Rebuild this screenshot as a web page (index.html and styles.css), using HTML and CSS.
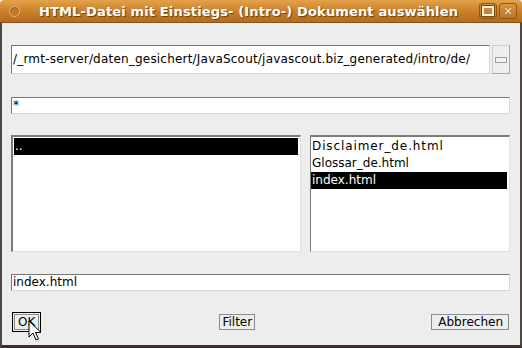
FILE: index.html
```html
<!DOCTYPE html>
<html>
<head>
<meta charset="utf-8">
<title>HTML-Datei mit Einstiegs- (Intro-) Dokument auswählen</title>
<link rel="stylesheet" href="styles.css">
</head>
<body>
<div class="dialog">
	<div class="titlebar">
		<span class="menu-dot"></span>
		<span class="title">HTML-Datei mit Einstiegs- (Intro-) Dokument auswählen</span>
		<span class="tb-btn"><span class="max-box"></span></span>
		<span class="tb-btn close">&#x2715;</span>
	</div>
	<div class="content">
		<div class="path-row">
			<div class="field path">/_rmt-server/daten_gesichert/JavaScout/javascout.biz_generated/intro/de/</div>
			<div class="path-btn"><span class="bar"></span></div>
		</div>
		<div class="field filter">*</div>
		<div class="lists">
			<ul class="list dirs">
				<li class="selected">..</li>
			</ul>
			<ul class="list files">
				<li class="wide">Disclaimer_de.html</li>
				<li>Glossar_de.html</li>
				<li class="selected">index.html</li>
			</ul>
		</div>
		<div class="field filename">index.html</div>
		<div class="buttons">
			<span class="focus"><span class="btn">OK</span></span>
			<span class="btn filter-btn">Filter</span>
			<span class="btn cancel">Abbrechen</span>
		</div>
	</div>
	<svg class="cursor" width="14" height="22" viewBox="0 0 14 22">
		<path d="M1 1 L1 17 L5 13 L8 20 L10.5 19 L7.5 12.5 L13 12.5 Z" fill="#fff" stroke="#000" stroke-width="1" stroke-linejoin="miter"/>
	</svg>
</div>
</body>
</html>
```

FILE: styles.css
```css
html, body {margin: 0; padding: 0;}
body {
	width: 522px;
	height: 348px;
	overflow: hidden;
	font: 12px "DejaVu Sans", "Liberation Sans", sans-serif;
	color: #000;
}

.dialog {
	position: relative;
	width: 522px;
	height: 348px;
	display: flex;
	flex-direction: column;
}

.titlebar {
	height: 23px;
	flex: none;
	display: flex;
	align-items: center;
	background: linear-gradient(#e3a24a, #c97d28 55%, #b56c1e);
	border-bottom: 1px solid #8a5414;
	box-sizing: border-box;
	border-radius: 4px 4px 0 0;
	padding: 0 5px 0 9px;
}

.menu-dot {
	width: 9px;
	height: 9px;
	border-radius: 50%;
	background: #c17a2a;
	border: 1px solid #e9bb7c;
	box-shadow: inset 0 1px 1px #8c5318;
}

.title {
	flex: 1;
	text-align: center;
	color: #fff;
	font-weight: bold;
	font-size: 13px;
	letter-spacing: 0.15px;
	text-shadow: 1px 1px 1px #6b3e0c;
	white-space: nowrap;
}

.tb-btn {
	width: 18px;
	height: 16px;
	margin-left: 2px;
	border: 1px solid #8e5515;
	border-radius: 3px;
	background: linear-gradient(#d99440, #c07628);
	display: flex;
	align-items: center;
	justify-content: center;
	box-sizing: border-box;
}

.tb-btn .max-box {
	width: 8px;
	height: 6px;
	border: 2px solid #fff3e2;
	outline: 1px solid #7a4610;
}

.tb-btn.close {
	color: #fff6ea;
	font-weight: bold;
	font-size: 11px;
	text-shadow: 0 0 1px #5c340a;
}

.content {
	flex: 1;
	background: #ededed;
	border-left: 2px solid #4d4843;
	border-right: 2px solid #4d4843;
	border-bottom: 3px solid #3a2f2f;
	padding: 22px 10px 0 9px;
	display: flex;
	flex-direction: column;
}

.field {
	background: #fff;
	border: 1px solid #d8d8d8;
	border-top-color: #777;
	border-left-color: #777;
	height: 15px;
	line-height: 15px;
	padding: 0 1px;
	white-space: nowrap;
	overflow: hidden;
}

.path-row {
	display: flex;
	gap: 2px;
	height: 29px;
}

.field.path {
	flex: 1;
	height: 27px;
	line-height: 27px;
	letter-spacing: 0.2px;
}

.path-btn {
	width: 18px;
	border: 1px solid #a8a8a8;
	border-top-color: #d0d0d0;
	border-left-color: #d0d0d0;
	box-sizing: border-box;
	display: flex;
	align-items: center;
	justify-content: center;
}

.path-btn .bar {
	width: 10px;
	height: 4px;
	border: 1px solid #a0a0a0;
	background: #f2f2f2;
}

.field.filter {
	margin-top: 23px;
}

.lists {
	margin-top: 21px;
	display: flex;
	gap: 9px;
	height: 117px;
}

.list {
	margin: 0;
	list-style: none;
	background: #fff;
	border: 2px solid #7a7a7a;
	border-right: 1px solid #e0e0e0;
	border-bottom: 1px solid #e0e0e0;
	padding: 1px 2px 0 1px;
}

.list.dirs {
	width: 284px;
	padding-left: 1px;
	padding-right: 2px;
}

.list.files {
	flex: 1;
	border-left-width: 1px;
	padding-left: 0;
}

.list li {
	height: 17px;
	line-height: 17px;
	padding-left: 1px;
	white-space: nowrap;
}

.list li.wide {
	letter-spacing: 0.9px;
}

.list li.selected {
	background: #000;
	color: #fff;
}

.field.filename {
	margin-top: 22px;
}

.buttons {
	margin-top: 21px;
	display: flex;
	justify-content: space-between;
	align-items: center;
	height: 20px;
}

.btn {
	display: inline-block;
	height: 14px;
	line-height: 14px;
	padding: 0 2px;
	border: 1px solid #8c8c8c;
	background: #eeeeee;
}

.btn.filter-btn {
	margin-left: 2px;
}

.btn.cancel {
	padding: 0 5px 0 6px;
	margin-right: 1px;
}

.focus {
	border: 1px solid #000;
	padding: 1px;
	margin-left: 1px;
	display: inline-block;
	line-height: 0;
}

.focus .btn {
	padding: 0 3px;
}

.cursor {
	position: absolute;
	left: 28px;
	top: 320px;
}
```
